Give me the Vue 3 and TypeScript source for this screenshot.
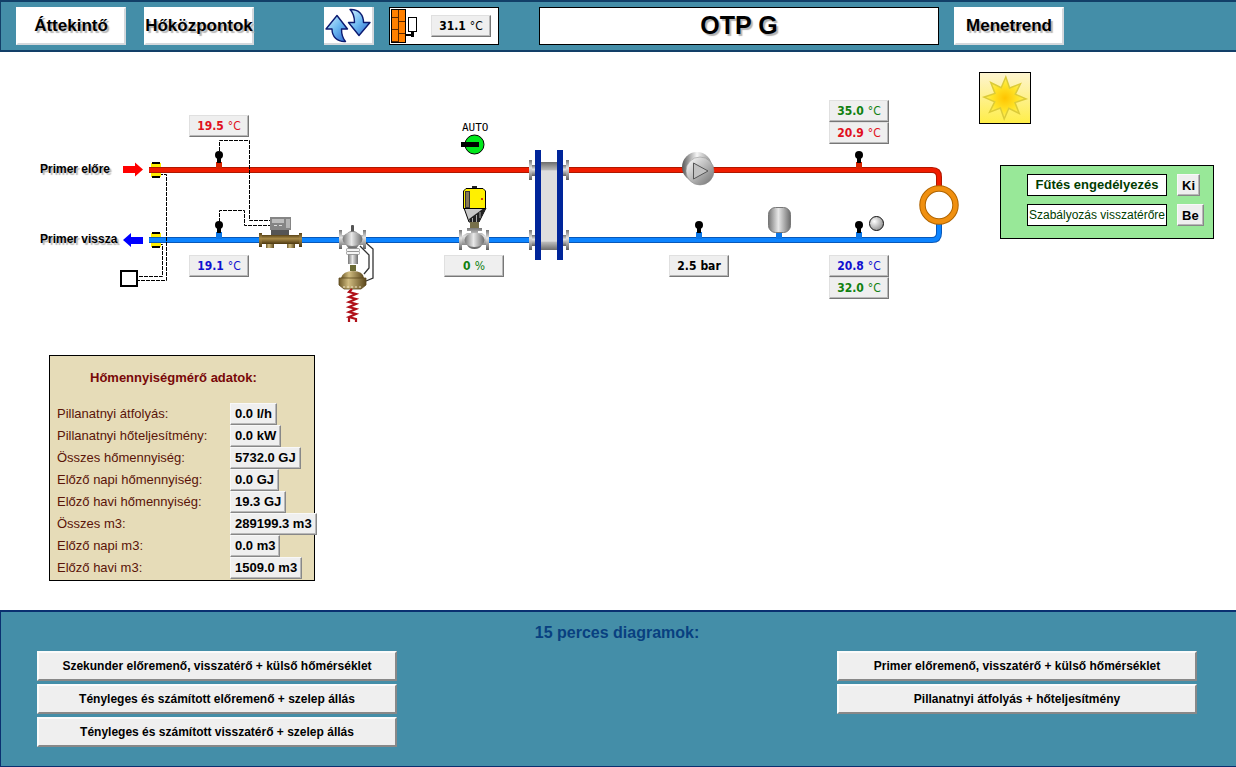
<script setup lang="ts">
interface Readout {
  id: string
  label: string
  value: string
  unit: string
  tone: 'red' | 'blue' | 'green' | 'black'
  light?: boolean
  x: number
  y: number
}

interface MeterRow {
  label: string
  value: string
}

interface Sensor {
  x: number
  y: number
  pipe: 'hot' | 'cold'
}

const readouts: Readout[] = [
  { id: 'pf', label: 'Primer előremenő', value: '19.5', unit: '°C', tone: 'red', light: true, x: 189, y: 63 },
  { id: 'pr', label: 'Primer visszatérő', value: '19.1', unit: '°C', tone: 'blue', light: true, x: 189, y: 203 },
  { id: 'valve', label: 'Szelep állás', value: '0', unit: '%', tone: 'green', light: true, x: 444, y: 203 },
  { id: 'press', label: 'Nyomás', value: '2.5', unit: 'bar', tone: 'black', x: 669, y: 203 },
  { id: 'sfc', label: 'Számított előremenő', value: '35.0', unit: '°C', tone: 'green', light: true, x: 829, y: 48 },
  { id: 'sf', label: 'Szekunder előremenő', value: '20.9', unit: '°C', tone: 'red', light: true, x: 829, y: 70 },
  { id: 'sr', label: 'Szekunder visszatérő', value: '20.8', unit: '°C', tone: 'blue', light: true, x: 829, y: 203 },
  { id: 'src', label: 'Számított visszatérő', value: '32.0', unit: '°C', tone: 'green', light: true, x: 829, y: 225 },
]

const sensors: Sensor[] = [
  { x: 219, y: 118, pipe: 'hot' },
  { x: 219, y: 188, pipe: 'cold' },
  { x: 699, y: 188, pipe: 'cold' },
  { x: 859, y: 118, pipe: 'hot' },
  { x: 859, y: 188, pipe: 'cold' },
]

const meterRows: MeterRow[] = [
  { label: 'Pillanatnyi átfolyás:', value: '0.0 l/h' },
  { label: 'Pillanatnyi hőteljesítmény:', value: '0.0 kW' },
  { label: 'Összes hőmennyiség:', value: '5732.0 GJ' },
  { label: 'Előző napi hőmennyiség:', value: '0.0 GJ' },
  { label: 'Előző havi hőmennyiség:', value: '19.3 GJ' },
  { label: 'Összes m3:', value: '289199.3 m3' },
  { label: 'Előző napi m3:', value: '0.0 m3' },
  { label: 'Előző havi m3:', value: '1509.0 m3' },
]

const leftCharts: string[] = [
  'Szekunder előremenő, visszatérő + külső hőmérséklet',
  'Tényleges és számított előremenő + szelep állás',
  'Tényleges és számított visszatérő + szelep állás',
]

const rightCharts: string[] = [
  'Primer előremenő, visszatérő + külső hőmérséklet',
  'Pillanatnyi átfolyás + hőteljesítmény',
]

function starPoints(cx: number, cy: number, outer: number, inner: number, tips: number): string {
  const pts: string[] = []
  for (let i = 0; i < tips * 2; i++) {
    const r = i % 2 === 0 ? outer : inner
    const a = (Math.PI * i) / tips - Math.PI / 2 + 0.04
    pts.push(`${(cx + r * Math.cos(a)).toFixed(1)},${(cy + r * Math.sin(a)).toFixed(1)}`)
  }
  return pts.join(' ')
}
const sun = starPoints(25, 25, 21, 11, 8)
</script>

<template>
  <div class="page">
    <header class="topbar">
      <nav class="nav">
        <button type="button" class="nav-btn">Áttekintő</button>
        <button type="button" class="nav-btn">Hőközpontok</button>
      </nav>
      <button type="button" class="refresh" aria-label="Frissítés">
        <svg width="48" height="36" viewBox="0 0 48 36" aria-hidden="true">
          <defs>
            <linearGradient id="arrowUp" x1="0" y1="0" x2="1" y2="1">
              <stop offset="0" stop-color="#d8f2ff" />
              <stop offset="0.5" stop-color="#6bb8f0" />
              <stop offset="1" stop-color="#2a62cc" />
            </linearGradient>
          </defs>
          <g fill="url(#arrowUp)" stroke="#0b1a70" stroke-width="1.4" stroke-linejoin="round">
            <path d="M13 8.500 L23.500 22 L17.500 22 C17.500 27 18.500 31 21.500 34.500 C13 35 8 29.500 8 22 L2 22 Z" />
            <path d="M35 28.500 L24.500 15.500 L30.500 15.500 C30.500 10 29.500 6 26 2.500 C35 2 39.500 8 39.500 15.500 L46 15.500 Z" />
          </g>
        </svg>
      </button>
      <div class="outdoor">
        <svg width="30" height="36" viewBox="0 0 30 36" aria-hidden="true">
          <rect x="1.500" y="1.500" width="14" height="33" fill="#ff8000" stroke="#000" />
          <path d="M8.500 2V34M2 9.500H8.500M2 21.500H8.500M2 33.500H8.500M8.500 13.500H15M8.500 25.500H15" stroke="#5a2800" fill="none" />
          <path d="M16 26h5v-3h3v6h-3v-1h-5z" fill="#000" />
          <rect x="18.500" y="9.500" width="8" height="14" fill="#fff" stroke="#000" />
        </svg>
        <output class="readout outdoor-value" aria-label="Külső hőmérséklet">31.1 <span class="thin">°C</span></output>
      </div>
      <h1 class="title">OTP G</h1>
      <button type="button" class="nav-btn">Menetrend</button>
    </header>

    <main class="main">
      <div class="upper">
        <section class="diagram" aria-label="Kapcsolási séma">
          <svg class="scheme" width="960" height="290" viewBox="0 0 960 290" aria-hidden="true">
            <defs>
              <linearGradient id="steelV" x1="0" y1="0" x2="0" y2="1">
                <stop offset="0" stop-color="#777" />
                <stop offset="0.4" stop-color="#e2e2e2" />
                <stop offset="1" stop-color="#606060" />
              </linearGradient>
              <linearGradient id="steelH" x1="0" y1="0" x2="1" y2="0">
                <stop offset="0" stop-color="#777" />
                <stop offset="0.45" stop-color="#e8e8e8" />
                <stop offset="1" stop-color="#6c6c6c" />
              </linearGradient>
              <linearGradient id="brassH" x1="0" y1="0" x2="1" y2="0">
                <stop offset="0" stop-color="#6e5a28" />
                <stop offset="0.35" stop-color="#d0bc80" />
                <stop offset="1" stop-color="#5c481c" />
              </linearGradient>
              <linearGradient id="brassV" x1="0" y1="0" x2="0" y2="1">
                <stop offset="0" stop-color="#5a4418" />
                <stop offset="0.4" stop-color="#a88a48" />
                <stop offset="1" stop-color="#4c3810" />
              </linearGradient>
              <linearGradient id="plate" x1="0" y1="0" x2="0" y2="1">
                <stop offset="0" stop-color="#6c6c6c" />
                <stop offset="0.09" stop-color="#b8b8b8" />
                <stop offset="0.1" stop-color="#dedede" />
                <stop offset="0.9" stop-color="#dedede" />
                <stop offset="0.91" stop-color="#bcbcbc" />
                <stop offset="1" stop-color="#6c6c6c" />
              </linearGradient>
              <linearGradient id="pumpFront" x1="0" y1="0" x2="1" y2="1">
                <stop offset="0.1" stop-color="#f4f4f4" />
                <stop offset="1" stop-color="#6e6e6e" />
              </linearGradient>
              <linearGradient id="pumpBack" x1="0" y1="0" x2="1" y2="0">
                <stop offset="0" stop-color="#585858" />
                <stop offset="0.5" stop-color="#f6f6f6" />
                <stop offset="1" stop-color="#8a8a8a" />
              </linearGradient>
              <radialGradient id="ball" cx="0.35" cy="0.35" r="0.7">
                <stop offset="0" stop-color="#fff" />
                <stop offset="1" stop-color="#909090" />
              </radialGradient>
            </defs>

            <g fill="none">
              <path class="hot-edge" stroke-width="6" d="M149 118H530M568 118H932Q939 118 939 125V136" />
              <path class="hot" stroke-width="4" d="M149 118H530M568 118H932Q939 118 939 125V136" />
              <path class="cold-edge" stroke-width="6" d="M149 188H530M568 188H932Q939 188 939 181V170" />
              <path class="cold" stroke-width="4" d="M149 188H530M568 188H932Q939 188 939 181V170" />
            </g>

            <g fill="none" stroke="#000" stroke-dasharray="4 1">
              <path d="M219.500 99V88.500H249.500V168.500H271" />
              <path d="M219.500 170V158.500H244.500V173.500H271" />
              <path d="M159 122.500H166.500V228.500H138" />
              <path d="M159 192.500H162.500V224.500H138" />
            </g>
            <rect x="121" y="219" width="16" height="15" fill="#fff" stroke="#000" stroke-width="2" />

            <g v-for="y in [118, 188]" :key="y">
              <path :d="`M151 ${y - 7}h10v4h-10zM151 ${y + 3}h10v4h-10z`" fill="#ffef00" />
              <path :d="`M152 ${y - 8}h8v2h-8zM152 ${y + 6}h8v2h-8z`" fill="#000" />
            </g>

            <path d="M123 114H135V110.500L143 117.500L135 124.500V121H123Z" fill="#ff0000" />
            <path d="M143 185H131V181L123 188L131 195V192H143Z" fill="#0000ff" />

            <g v-for="s in sensors" :key="`${s.x}-${s.y}`">
              <rect :class="s.pipe + '-stub'" :x="s.x - 3" :y="s.y - 8" width="6" height="7" />
              <rect :x="s.x - 2" :y="s.y - 13" width="4" height="6" fill="#000" />
              <circle :cx="s.x" :cy="s.y - 15" r="4" fill="#000" />
            </g>

            <!-- heat meter -->
            <g>
              <rect x="271" y="177" width="18" height="6" fill="#555" />
              <rect x="270" y="165" width="21" height="13" fill="#858585" />
              <rect x="272" y="167" width="12" height="4" fill="#bdbdbd" />
              <rect x="286" y="167" width="4" height="9" fill="#b4b4b4" />
              <path d="M274 173h3v1h-3zM279 173h3v1h-3z" fill="#ddd" />
              <rect x="266" y="189" width="8" height="7" fill="url(#brassH)" />
              <rect x="287" y="189" width="8" height="7" fill="url(#brassH)" />
              <rect x="262" y="183" width="37" height="9" fill="url(#brassV)" />
              <rect x="259" y="181" width="3" height="14" fill="url(#brassV)" />
              <rect x="299" y="181" width="3" height="14" fill="url(#brassV)" />
            </g>

            <!-- differential pressure controller -->
            <g>
              <path d="M360 194L369 203V216L364 222M365 190L373 197V226L366 229" fill="none" stroke="#333" stroke-width="1.300" />
              <rect x="351" y="173" width="3" height="9" rx="1" fill="#555" />
              <path d="M342 183H346Q348 179 352.500 179Q357 179 359 183H363V193H359L356 197H349L346 193H342Z" fill="url(#steelV)" />
              <ellipse cx="352.500" cy="187" rx="10" ry="7" fill="url(#steelH)" />
              <rect x="339" y="178" width="3" height="19" fill="url(#steelV)" />
              <rect x="363" y="178" width="3" height="19" fill="url(#steelV)" />
              <rect x="348" y="202" width="10" height="10" fill="url(#steelH)" />
              <rect x="346.500" y="196.500" width="13" height="3" rx="1" fill="#f4f4f4" stroke="#888" stroke-width="0.800" />
              <rect x="346.500" y="199.500" width="13" height="3" rx="1" fill="#f4f4f4" stroke="#888" stroke-width="0.800" />
              <rect x="350" y="213" width="6" height="6" fill="#6b6b35" />
              <path d="M341 226Q343 219 353 219Q363 219 364 226Z" fill="url(#brassH)" />
              <path d="M339 226H366V233L361 237H344L339 233Z" fill="url(#brassH)" stroke="#5c481c" stroke-width="0.800" />
              <path d="M343 235H363" stroke="#efe6c8" stroke-dasharray="2 2" />
              <path d="M352 237L349 240L356 242L349 245L356 247L349 250L356 252L349 255L356 257L349 260L356 262L349 265L356 267V270M349 265V270" fill="none" stroke="#b01018" stroke-width="2.200" />
            </g>

            <!-- mode switch -->
            <g>
              <circle cx="474.500" cy="92.500" r="9.500" fill="#00e81c" stroke="#000" />
              <rect x="461" y="90" width="18" height="5" fill="#000" />
            </g>

            <!-- motorised control valve -->
            <g>
              <rect x="472" y="134" width="5" height="3" fill="#222" />
              <path d="M464 156H486L479 170H469Z" fill="#c8c8c8" stroke="#000" />
              <path d="M469 167L484 156H486L479 170H470Z" fill="#222" />
              <path d="M472.500 166V170M476.500 163V170M480 160V166" stroke="#aaa" />
              <path d="M466 136.500H483L485.500 139V156.500H463.500V139Z" fill="#fff000" stroke="#000" />
              <rect x="465.500" y="139.500" width="4" height="16" fill="#857858" stroke="#333" />
              <path d="M481 146h2v2h-2z" fill="#d04010" />
              <rect x="470" y="170" width="9" height="6" fill="#77704a" />
              <path d="M467 176H482V179H478V181H482L486 184V193H482Q480 197 474.500 197Q469 197 467 193H462V184L467 181H471V179H467Z" fill="url(#steelV)" />
              <ellipse cx="474.500" cy="188" rx="10" ry="7" fill="url(#steelH)" />
              <rect x="459" y="178" width="3" height="20" fill="url(#steelV)" />
              <rect x="486" y="178" width="3" height="20" fill="url(#steelV)" />
            </g>

            <!-- plate heat exchanger -->
            <g>
              <g v-for="y in [108, 178]" :key="y" fill="url(#steelV)">
                <rect x="529" :y="y" width="3" height="20" />
                <rect x="532" :y="y + 5" width="3" height="11" />
                <rect x="563" :y="y + 5" width="3" height="11" />
                <rect x="566" :y="y" width="3" height="20" />
              </g>
              <rect x="541" y="110" width="16" height="88" fill="url(#plate)" />
              <rect x="535" y="98" width="6" height="110" fill="#00259a" />
              <rect x="557" y="98" width="6" height="110" fill="#00259a" />
            </g>

            <!-- pump -->
            <g>
              <circle cx="697" cy="115" r="15" fill="url(#pumpBack)" />
              <circle cx="700" cy="119" r="14" fill="url(#pumpFront)" stroke="#888" stroke-width="0.500" />
              <path d="M693.500 111L708 119L693.500 127Z" fill="#c2c2c2" stroke="#555" />
            </g>

            <!-- expansion vessel -->
            <rect class="cold-stub" x="776" y="179" width="6" height="8" />
            <rect x="768.500" y="155.500" width="22" height="25" rx="7" fill="url(#steelH)" stroke="#777" />

            <circle cx="876.500" cy="171.500" r="7" fill="url(#ball)" stroke="#111" />
            <circle cx="939" cy="153" r="16.500" fill="#fff" stroke="#b06400" stroke-width="6.500" />
            <circle cx="939" cy="153" r="16.500" fill="none" stroke="#f09010" stroke-width="4.500" />
          </svg>

          <span class="tag tag-flow">Primer előre</span>
          <span class="tag tag-return">Primer vissza</span>
          <span class="mode">AUTO</span>
          <output
            v-for="r in readouts"
            :key="r.id"
            class="readout pinned"
            :class="r.tone"
            :aria-label="r.label"
            :style="{ left: r.x + 'px', top: r.y + 'px' }"
          >{{ r.value }} <span :class="{ thin: r.light }">{{ r.unit }}</span></output>
        </section>

        <aside class="side">
          <div class="sun" role="img" aria-label="Nyári üzem">
            <svg width="50" height="50" viewBox="0 0 50 50" aria-hidden="true">
              <defs>
                <radialGradient id="sunFill">
                  <stop offset="0" stop-color="#ffc400" />
                  <stop offset="0.6" stop-color="#ffe428" />
                  <stop offset="1" stop-color="#fff060" />
                </radialGradient>
              </defs>
              <polygon :points="sun" fill="url(#sunFill)" stroke="#dccb38" stroke-width="1.500" />
            </svg>
          </div>
          <div class="controls">
            <span id="heating" class="field strong">Fűtés engedélyezés</span>
            <button type="button" class="toggle" aria-describedby="heating">Ki</button>
            <span id="regulation" class="field">Szabályozás visszatérőre</span>
            <button type="button" class="toggle" aria-describedby="regulation">Be</button>
          </div>
        </aside>
      </div>

      <section class="meter">
        <h2 class="meter-title">Hőmennyiségmérő adatok:</h2>
        <table class="meter-table">
          <tbody>
            <tr v-for="row in meterRows" :key="row.label">
              <th scope="row">{{ row.label }}</th>
              <td><span class="meter-value">{{ row.value }}</span></td>
            </tr>
          </tbody>
        </table>
      </section>
    </main>

    <footer class="charts">
      <h2 class="charts-title">15 perces diagramok:</h2>
      <div class="chart-cols">
        <div class="chart-col">
          <button v-for="c in leftCharts" :key="c" type="button" class="chart-btn">{{ c }}</button>
        </div>
        <div class="chart-col">
          <button v-for="c in rightCharts" :key="c" type="button" class="chart-btn">{{ c }}</button>
        </div>
      </div>
    </footer>
  </div>
</template>

<style>
body {
  margin: 0;
  background: #fff;
}
</style>

<style scoped>
.page {
  display: flex;
  flex-direction: column;
  min-height: 100vh;
  font-family: "Liberation Sans", Arial, sans-serif;
  color: #000;
}
.page * {
  box-sizing: border-box;
}
button {
  font-family: inherit;
  padding: 0;
  cursor: pointer;
}

.topbar {
  display: flex;
  align-items: flex-start;
  padding: 5px 15px;
  border: solid #123f68;
  border-width: 2px 0 2px 1px;
  background: #448ea8;
}
.nav {
  display: flex;
  gap: 18px;
  margin-right: 70px;
}
.nav-btn {
  width: 110px;
  height: 38px;
  border: 2px solid;
  border-color: #fff #d4d8dc #d4d8dc #fff;
  background: #fff;
  color: #000;
  font-size: 17px;
  font-weight: bold;
  line-height: 20px;
  white-space: nowrap;
  display: flex;
  align-items: center;
  justify-content: center;
  text-shadow: 2px 2px 1px #b4b4b4;
}
.refresh {
  width: 50px;
  height: 38px;
  margin-right: 15px;
  border: 0 solid #d4d8dc;
  border-width: 0 2px 2px 0;
  background: #fff;
}
.refresh svg {
  display: block;
}
.outdoor {
  display: flex;
  align-items: center;
  width: 110px;
  height: 38px;
  margin-right: 40px;
  border: 1px solid #000;
  background: #fff;
}
.outdoor-value {
  margin-left: 11px;
}
.title {
  flex: 1 1 400px;
  max-width: 400px;
  height: 38px;
  margin: 0 15px 0 0;
  border: 1px solid #000;
  background: #fff;
  font-size: 25px;
  line-height: 35px;
  text-align: center;
  text-shadow: 2px 2px 1px #b4b4b4;
}

.readout {
  display: flex;
  align-items: center;
  justify-content: center;
  gap: 4px;
  width: 60px;
  height: 22px;
  border: 1px solid;
  border-color: #e0e0e0 #777 #777 #e0e0e0;
  box-shadow: inset -1px -1px 0 #b8b8b8;
  background: #efefef;
  font-family: "DejaVu Sans Condensed", "DejaVu Sans", sans-serif;
  font-size: 12px;
  font-weight: bold;
  line-height: 16px;
  white-space: nowrap;
}
.thin {
  font-weight: normal;
}
.red { color: #e01020; }
.blue { color: #1010d0; }
.green { color: #108010; }
.black { color: #000; }

.main {
  flex: 1;
  padding-bottom: 29px;
}
.upper {
  display: flex;
  align-items: flex-start;
}
.diagram {
  position: relative;
  flex: 1 0 960px;
  padding-bottom: 13px;
}
.scheme {
  display: block;
}
.hot { stroke: #f01c00; }
.hot-edge { stroke: #b01800; }
.cold { stroke: #0c84ff; }
.cold-edge { stroke: #0858b8; }
.hot-stub { fill: #d82400; }
.cold-stub { fill: #0c78e8; }
.pinned {
  position: absolute;
}
.tag {
  position: absolute;
  left: 40px;
  font-size: 12px;
  font-weight: bold;
  line-height: 14px;
  text-shadow: 2px 2px 1px #b4b4b4;
}
.tag-flow {
  top: 110px;
}
.tag-return {
  top: 180px;
}
.mode {
  position: absolute;
  left: 462px;
  top: 69px;
  font-family: "DejaVu Sans Mono", monospace;
  font-size: 11px;
  line-height: 14px;
}

.side {
  padding: 20px 22px 0 19px;
}
.sun {
  width: 52px;
  height: 52px;
  border: 1px solid #000;
  background: linear-gradient(#fdf4d0, #ffee48);
}
.sun svg {
  display: block;
}
.controls {
  display: grid;
  grid-template-columns: 140px auto;
  justify-content: start;
  gap: 8px 10px;
  width: 214px;
  margin: 41px 0 0 21px;
  padding: 8px 10px 12px 26px;
  border: 1px solid #000;
  background: #98e898;
}
.field {
  display: flex;
  align-items: center;
  justify-content: center;
  height: 22px;
  border: 1px solid #000;
  background: #fff;
  color: #003c00;
  font-size: 12px;
  line-height: 16px;
  white-space: nowrap;
}
.field.strong {
  font-size: 13px;
  font-weight: bold;
}
.toggle {
  justify-self: start;
  height: 22px;
  padding: 0 4px;
  border: 1px solid;
  border-color: #f8f8f8 #888 #888 #f8f8f8;
  box-shadow: inset -1px -1px 0 #b8b8b8;
  background: #efefef;
  color: #000;
  font-size: 13px;
  font-weight: bold;
}

.meter {
  width: 266px;
  margin-left: 49px;
  padding-bottom: 1px;
  border: 1px solid #000;
  background: #e6dcb8;
}
.meter-title {
  margin: 13px 0 17px 40px;
  color: #780808;
  font-size: 13px;
  line-height: 17px;
}
.meter-table {
  border-collapse: collapse;
}
.meter-table th {
  min-width: 180px;
  height: 22px;
  padding: 0 0 0 7px;
  color: #5a1408;
  font-size: 13px;
  font-weight: normal;
  line-height: 16px;
  text-align: left;
  white-space: nowrap;
}
.meter-table td {
  padding: 0;
}
.meter-value {
  display: block;
  width: max-content;
  height: 22px;
  padding: 0 4px;
  border: 1px solid;
  border-color: #f8f8f8 #888 #888 #f8f8f8;
  box-shadow: inset -1px -1px 0 #b8b8b8;
  background: #efefef;
  font-size: 13px;
  font-weight: bold;
  line-height: 20px;
  white-space: nowrap;
}

.charts {
  padding: 11px 39px 19px 36px;
  border: solid #0a3070;
  border-width: 2px 0 1px 1px;
  background: #448ea8;
}
.charts-title {
  margin: 0 0 8px;
  color: #084080;
  font-size: 16px;
  line-height: 20px;
  text-align: center;
}
.chart-cols {
  display: flex;
  justify-content: space-between;
  gap: 20px;
}
.chart-col {
  display: flex;
  flex: 0 1 360px;
  flex-direction: column;
  gap: 3px;
}
.chart-btn {
  height: 30px;
  border: 2px solid;
  border-color: #fbfbfb #888 #888 #fbfbfb;
  background: #efefef;
  color: #000;
  font-size: 12px;
  font-weight: bold;
}
</style>
